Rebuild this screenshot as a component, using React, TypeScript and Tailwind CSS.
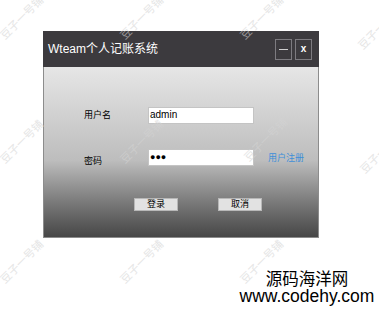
import React from "react";

const marks: [number, number][] = [
  [22, 18], [142, 18], [262, 18], [380, 28],
  [22, 142], [142, 142], [266, 140], [382, 152],
  [22, 262], [142, 262], [262, 262],
];

function Watermark({ x, y }: { x: number; y: number }) {
  return (
    <span
      className="absolute text-[11px] leading-none text-[#d4d4d4] opacity-60 whitespace-nowrap -rotate-[45deg] -translate-x-1/2 -translate-y-1/2 pointer-events-none select-none"
      style={{ left: x, top: y }}
    >
      豆子一号铺
    </span>
  );
}

export default function App() {
  return (
    <div
      className="relative w-[379px] h-[310px] overflow-hidden bg-white pt-[31px] pl-[43px]"
      style={{ fontFamily: '"Liberation Sans", "Noto Sans CJK SC", sans-serif' }}
    >
      {/* 登录窗口 */}
      <div className="w-[276px] h-[207px] flex flex-col">
        <div className="h-[36px] bg-[#3c3a3e] flex items-center justify-between pl-[5px] pr-[7px]">
          <span className="text-white text-[12px]">Wteam个人记账系统</span>
          <div className="flex gap-[3px]">
            <button className="w-[17px] h-[21px] border border-[#7d7b80] flex items-center justify-center">
              <span className="block w-[9px] h-px bg-[#cfcfcf]" />
            </button>
            <button className="w-[17px] h-[21px] border border-[#7d7b80] flex items-center justify-center text-white text-[10px] font-bold leading-none">
              x
            </button>
          </div>
        </div>
        <div className="flex-1 border-x border-b border-[#8c8c8c] bg-gradient-to-b from-[#e6e6e6] via-[#bdbdbd] via-55% to-[#474747] text-[9px] text-black">
          <div className="pt-[40px] pl-[40px] flex items-center">
            <span className="w-[64px]">用户名</span>
            <div className="w-[106px] h-[17px] bg-white border border-[#c4c4c4] text-[10px] leading-[14px] pl-[1px]">admin</div>
          </div>
          <div className="pt-[23px] pl-[40px] flex items-center">
            <span className="w-[64px] pt-[8px]">密码</span>
            <div className="w-[106px] h-[17px] bg-white border border-[#c4c4c4] text-[9px] leading-[14px] pl-[1px]">●●●</div>
            <span className="ml-[14px] pt-[2px] text-[#3d8fd9]">用户注册</span>
          </div>
          <div className="pt-[29px] pl-[90px] flex gap-[40px]">
            <button className="w-[44px] h-[13px] bg-[#e2e2e2] border border-[#b8b8b8] text-[9px] leading-[11px]">登录</button>
            <button className="w-[44px] h-[13px] bg-[#e2e2e2] border border-[#b8b8b8] text-[9px] leading-[11px]">取消</button>
          </div>
        </div>
      </div>

      {marks.map(([x, y], i) => (
        <Watermark key={i} x={x} y={y} />
      ))}

      <div className="absolute left-[236px] top-[271px] w-[142px] text-center text-black leading-[17px]">
        <div className="text-[16.5px]">源码海洋网</div>
        <div className="text-[17.5px]">www.codehy.com</div>
      </div>
    </div>
  );
}
